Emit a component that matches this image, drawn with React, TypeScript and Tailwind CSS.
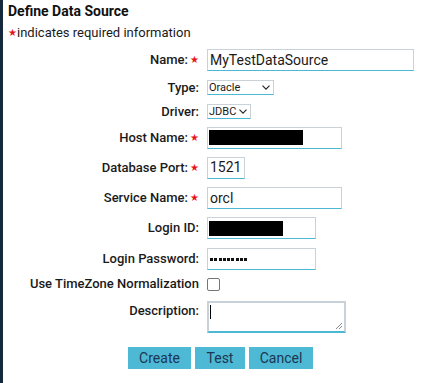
import React from "react";

// Required star marker
function Star() {
  return <span className="text-[#e8141c] text-[10px] ml-[2px] relative -top-[1px]">★</span>;
}

function Field({ children, className = "" }: { children?: React.ReactNode; className?: string }) {
  return (
    <div
      className={`h-[22px] border border-[#c9d1d9] border-b-[#4cb8d4] bg-white flex items-center px-[2px] text-[14px] text-[#1a1a1a] ${className}`}
    >
      {children}
    </div>
  );
}

function Select({ value, width }: { value: string; width: string }) {
  return (
    <div
      className={`${width} h-[15px] border border-[#c9d1d9] border-b-[#4cb8d4] bg-white flex items-center justify-between pl-[1px] pr-[3px] text-[11px] leading-none text-[#1a1a1a]`}
    >
      <span>{value}</span>
      <svg width="8" height="5" viewBox="0 0 8 5" fill="none">
        <path d="M0.5 0.6 L4 4.2 L7.5 0.6" stroke="#222" strokeWidth="1.1" />
      </svg>
    </div>
  );
}

function Row({
  label,
  required,
  h,
  align = "items-center",
  children,
}: {
  label: string;
  required?: boolean;
  h: string;
  align?: string;
  children: React.ReactNode;
}) {
  return (
    <div className={`flex ${align} ${h}`}>
      <div className="w-[197px] shrink-0 text-right font-medium text-[13px] text-[#1a1a1a] pr-[1px]">
        {label}
        {required && <Star />}
      </div>
      <div className="ml-[7px] flex">{children}</div>
    </div>
  );
}

export default function App() {
  return (
    <div className="flex w-[434px] h-[383px] bg-white overflow-hidden" style={{ fontFamily: "Roboto, 'Liberation Sans', sans-serif" }}>
      <div className="w-[3px] shrink-0 bg-[#15273a]" />
      <div className="flex-1 flex flex-col">
        <div className="h-[45px] pl-[5px] pt-[1px]">
          <div className="text-[14px] font-bold leading-[20px] text-[#111]">Define Data Source</div>
          <div className="text-[13px] leading-[20px] mt-[2px] text-[#1a1a1a]">
            <span className="text-[#e8141c] text-[10px] relative -top-[1px]">★</span>
            indicates required information
          </div>
        </div>

        <Row label="Name:" required h="h-[30px]">
          <Field className="w-[207px]">MyTestDataSource</Field>
        </Row>
        <Row label="Type:" h="h-[25px]">
          <Select value="Oracle" width="w-[67px]" />
        </Row>
        <Row label="Driver:" h="h-[23px]">
          <Select value="JDBC" width="w-[44px]" />
        </Row>
        <Row label="Host Name:" required h="h-[29px]">
          <Field className="w-[135px] pl-[1px]">
            <div className="w-[94px] h-[15px] bg-black" />
          </Field>
        </Row>
        <Row label="Database Port:" required h="h-[31px]">
          <Field className="w-[38px]">1521</Field>
        </Row>
        <Row label="Service Name:" required h="h-[30px]">
          <Field className="w-[135px]">orcl</Field>
        </Row>
        <Row label="Login ID:" h="h-[30px]">
          <Field className="w-[109px] pl-[1px]">
            <div className="w-[74px] h-[15px] bg-black" />
          </Field>
        </Row>
        <Row label="Login Password:" h="h-[31px]">
          <Field className="w-[109px] gap-[1.3px] pl-[2px] pt-[2px]">
            {Array.from({ length: 9 }).map((_, i) => (
              <div key={i} className="w-[3px] h-[3px] bg-[#111]" />
            ))}
          </Field>
        </Row>
        <Row label="Use TimeZone Normalization" h="h-[20px]">
          <div className="w-[13px] h-[13px] rounded-[2px] border border-[#767676] bg-white" />
        </Row>
        <div className="h-[7px]" />
        <Row label="Description:" h="h-[46px]" align="items-start">
          <div className="relative w-[139px] h-[32px] border-2 border-[#c9d1d9] border-b-[#4cb8d4] bg-white">
            <div className="absolute left-[1px] top-[2px] w-[1px] h-[14px] bg-black" />
            <svg className="absolute right-[1px] bottom-[1px]" width="8" height="8" viewBox="0 0 8 8">
              <path d="M7 1 L1 7 M7 4 L4 7" stroke="#888" strokeWidth="1" />
            </svg>
          </div>
        </Row>
        <div className="flex gap-[4px] pl-[125px]">
          <button className="w-[63px] h-[22px] bg-[#4db9d5] text-[#1c3552] text-[14px]">Create</button>
          <button className="w-[50px] h-[22px] bg-[#4db9d5] text-[#1c3552] text-[14px]">Test</button>
          <button className="w-[64px] h-[22px] bg-[#4db9d5] text-[#1c3552] text-[14px]">Cancel</button>
        </div>
      </div>
    </div>
  );
}
